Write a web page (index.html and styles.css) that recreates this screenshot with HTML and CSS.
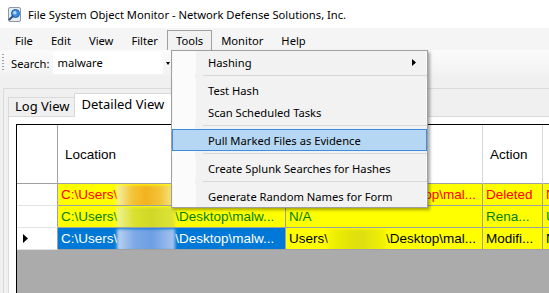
FILE: index.html
```html
<!DOCTYPE html>
<html>
<head>
<meta charset="utf-8">
<title>File System Object Monitor</title>
<link rel="stylesheet" href="styles.css">
</head>
<body>
<div class="window">
  <div class="titlebar">
    <svg class="appicon" width="15" height="15" viewBox="0 0 15 15">
      <rect x="1.5" y="0.5" width="12" height="14" rx="1.5" fill="#e4ebf2" stroke="#8d99a6"/>
      <circle cx="8.5" cy="6.5" r="4" fill="#3b8ee0" stroke="#1d5ea8"/>
      <circle cx="7.8" cy="5.8" r="1.7" fill="#b5dcff"/>
      <path d="M5.6 9.4 L2.5 12.5" stroke="#2b4f7d" stroke-width="2" stroke-linecap="round"/>
    </svg>
    <span class="title">File System Object Monitor - Network Defense Solutions, Inc.</span>
  </div>
  <div class="menubar">
    <span class="mi">File</span>
    <span class="mi">Edit</span>
    <span class="mi">View</span>
    <span class="mi">Filter</span>
    <span class="mi open">Tools</span>
    <span class="mi">Monitor</span>
    <span class="mi">Help</span>
  </div>
  <div class="toolbar">
    <span class="grip"></span>
    <span class="tlabel">Search:</span>
    <span class="combo">malware</span>
    <span class="ddarrow"></span>
  </div>
  <div class="client">
    <div class="panel">
      <div class="tabs">
        <div class="tab">Log View</div>
        <div class="tab active">Detailed View</div>
      </div>
      <div class="page">
        <div class="grid">
          <table class="dgv">
            <colgroup>
              <col class="c0"><col class="c1"><col class="c2"><col class="c3"><col class="c4">
            </colgroup>
            <tr class="hdr">
              <th class="rh"></th><th>Location</th><th></th><th>Action</th><th></th>
            </tr>
            <tr class="row red">
              <td class="rh"></td>
              <td>C:\Users\<span class="redact orange"></span>\Desktop\malware...</td>
              <td>Users\<span class="redact plain"></span>\Desktop\mal...</td>
              <td>Deleted</td>
              <td>N</td>
            </tr>
            <tr class="row green">
              <td class="rh"></td>
              <td>C:\Users\<span class="redact lime"></span>\Desktop\malw...</td>
              <td>N/A</td>
              <td>Rena...</td>
              <td>U</td>
            </tr>
            <tr class="row black">
              <td class="rh"><svg class="cur" width="6" height="9" viewBox="0 0 6 9"><path d="M0 0 L5 4.5 L0 9 Z" fill="#000"/></svg></td>
              <td class="sel">C:\Users\<span class="redact blue"></span>\Desktop\malw...</td>
              <td>Users\<span class="redact plain"></span>\Desktop\mal...</td>
              <td>Modifi...</td>
              <td>N</td>
            </tr>
          </table>
        </div>
      </div>
    </div>
  </div>

  <div class="dropdown">
    <div class="item">Hashing<svg class="sub" width="4" height="7" viewBox="0 0 4 7"><path d="M0 0 L4 3.5 L0 7 Z" fill="#000"/></svg></div>
    <div class="sep"></div>
    <div class="item">Test Hash</div>
    <div class="item">Scan Scheduled Tasks</div>
    <div class="sep"></div>
    <div class="item hot">Pull Marked Files as Evidence</div>
    <div class="sep"></div>
    <div class="item">Create Splunk Searches for Hashes</div>
    <div class="sep"></div>
    <div class="item">Generate Random Names for Form</div>
  </div>
</div>
</body>
</html>
```

FILE: styles.css
```css
* { box-sizing: border-box; }

html, body {
  margin: 0;
  padding: 0;
}

body {
  width: 549px;
  height: 293px;
  overflow: hidden;
  font-family: "Noto Sans", "DejaVu Sans", sans-serif;
  font-size: 11.2px;
  color: #000;
  background: #f0f0f0;
}

.window {
  position: relative;
  width: 549px;
  height: 293px;
  display: flex;
  flex-direction: column;
}

/* title bar */
.titlebar {
  height: 28px;
  flex: none;
  background: #fff;
  display: flex;
  align-items: center;
  padding-left: 7px;
  padding-top: 1px;
}
.appicon { flex: none; }
.title {
  margin-left: 6px;
  white-space: nowrap;
}

/* menu bar */
.menubar {
  height: 22px;
  flex: none;
  background: #f5f5f5;
  display: flex;
  align-items: flex-end;
  padding-left: 6px;
}
.mi {
  height: 20px;
  line-height: 19px;
  padding: 0 8px;
  border: 1px solid transparent;
  border-bottom: none;
  white-space: nowrap;
}
.mi.open {
  border-color: #a0a0a0;
  background: #f2f2f2;
}

/* tool strip */
.toolbar {
  height: 26px;
  flex: none;
  display: flex;
  align-items: center;
  background: linear-gradient(#fbfbfb, #f2f2f2);
  padding-left: 2px;
}
.grip {
  width: 3px;
  height: 18px;
  background: repeating-linear-gradient(to bottom, #a0a0a0 0 1px, transparent 1px 3px);
  background-size: 2px 100%;
  background-repeat: no-repeat;
}
.tlabel {
  margin-left: 6px;
  white-space: nowrap;
}
.combo {
  margin-left: 4px;
  width: 110px;
  height: 22px;
  background: #fff;
  line-height: 21px;
  padding-left: 4px;
}
.ddarrow {
  margin-left: 3px;
  width: 0;
  height: 0;
  border-left: 2.5px solid transparent;
  border-right: 2.5px solid transparent;
  border-top: 3px solid #000;
}

/* client area */
.client {
  flex: 1;
  display: flex;
  padding: 12px 0 0 3px;
  min-height: 0;
}
.panel {
  flex: 1;
  border-top: 1px solid #dadada;
  border-left: 1px solid #dadada;
  padding: 4px 0 0 4px;
  display: flex;
  flex-direction: column;
  min-height: 0;
}
.tabs {
  height: 23px;
  flex: none;
  display: flex;
  align-items: flex-end;
  position: relative;
  z-index: 1;
}
.tab {
  font-size: 13px;
  height: 19px;
  line-height: 17px;
  padding: 0 4px 0 6px;
  background: #f0f0f0;
  border: 1px solid #d9d9d9;
  border-bottom: none;
  white-space: nowrap;
}
.tab.active {
  height: 24px;
  margin-bottom: -1px;
  line-height: 21px;
  padding: 0 8px 0 7px;
  background: #fff;
  border-left-color: #d9d9d9;
  margin-left: -1px;
}
.page {
  flex: 1;
  background: #fff;
  border-top: 1px solid #d9d9d9;
  border-left: 1px solid #d9d9d9;
  padding: 7px 0 0 7px;
  display: flex;
  min-height: 0;
}

/* data grid */
.grid {
  flex: 1;
  background: #ababab;
  border-top: 1px solid #000;
  border-left: 1px solid #000;
  overflow: hidden;
}
.dgv {
  table-layout: fixed;
  border-collapse: separate;
  border-spacing: 0;
  width: 626px;
  font-family: "Liberation Sans", Arial, sans-serif;
  font-size: 13.5px;
}
.c0 { width: 41px; }
.c1 { width: 228px; }
.c2 { width: 197px; }
.c3 { width: 60px; }
.c4 { width: 100px; }

.dgv th {
  height: 59px;
  background: #fff;
  font-weight: normal;
  text-align: left;
  padding: 0 0 0 7px;
  border-right: 1px solid #d8d8d8;
  border-bottom: 1px solid #a0a0a0;
  white-space: nowrap;
  overflow: hidden;
}
.dgv th.rh { border-right-color: #a0a0a0; }

.dgv td {
  height: 22px;
  padding: 0 0 0 3px;
  background: #ffff00;
  border-right: 1px solid #a0a0a0;
  border-bottom: 1px solid #a0a0a0;
  white-space: nowrap;
  overflow: hidden;
  vertical-align: middle;
}
.dgv td.rh {
  background: #fff;
  border-bottom-color: #e3e3e3;
  border-right-color: #a0a0a0;
  padding-left: 6px;
}
.cur { display: block; }

.row.red td { color: #ff0000; }
.row.green td { color: #008000; }
.row.black td { color: #000; }
.dgv td.sel {
  background: #0078d7;
  color: #fff;
}

.redact {
  display: inline-block;
  width: 58px;
  height: 22px;
  margin: -4px 0 -6px;
  vertical-align: middle;
  filter: blur(1.5px);
}
.redact.orange {
  background: linear-gradient(to right, #f6f0a8 0%, #f3c53a 25%, #f2b21c 50%, #f3c53a 75%, #f4ec8a 100%);
}
.redact.lime {
  background: linear-gradient(to right, #eef29a 0%, #d9e02c 30%, #cfd828 60%, #e0e43a 100%);
}
.redact.blue {
  background: linear-gradient(to right, #bcd4f0 0%, #7fa9e6 30%, #6d9ee4 60%, #a8c6ee 100%);
}
.redact.plain {
  background: linear-gradient(to right, #f4f400 0%, #e2e20a 40%, #dede12 60%, #f4f400 100%);
}

/* dropdown menu */
.dropdown {
  position: absolute;
  left: 171px;
  top: 50px;
  width: 257px;
  background: #f2f2f2;
  border: 1px solid #a0a0a0;
  padding: 0;
  box-shadow: 2px 2px 3px rgba(0, 0, 0, 0.35);
  z-index: 5;
}
.item {
  height: 22px;
  line-height: 21px;
  padding-left: 35px;
  position: relative;
  white-space: nowrap;
  border: 1px solid transparent;
  background: linear-gradient(to right, #fbfbfb 0 23px, transparent 23px);
}
.item.hot {
  background: #b5d7f3;
  border-color: #3d8ee0;
}
.sub {
  position: absolute;
  right: 10px;
  top: 7px;
}
.sep {
  height: 6px;
  background:
    linear-gradient(#d7d7d7, #d7d7d7) 31px 2px / calc(100% - 31px) 1px no-repeat,
    linear-gradient(to right, #fbfbfb 0 23px, transparent 23px);
}
```
